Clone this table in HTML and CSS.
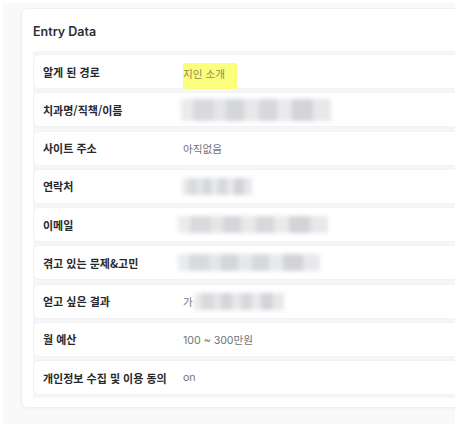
FILE: index.html
```html
<!DOCTYPE html>
<html lang="ko">
<head>
<meta charset="utf-8">
<link rel="stylesheet" href="styles.css">
</head>
<body>
<div class="page">
  <div class="card">
    <h2 class="title">Entry Data</h2>
    <div class="list">
      <div class="row"><div class="label">알게 된 경로</div><div class="value"><span class="mark">지인 소개</span></div></div>
      <div class="row"><div class="label">치과명/직책/이름</div><div class="value"><span class="blur b-name"></span></div></div>
      <div class="row"><div class="label">사이트 주소</div><div class="value">아직없음</div></div>
      <div class="row"><div class="label">연락처</div><div class="value"><span class="blur b-phone"></span></div></div>
      <div class="row"><div class="label">이메일</div><div class="value"><span class="blur b-mail"></span></div></div>
      <div class="row"><div class="label">겪고 있는 문제&amp;고민</div><div class="value"><span class="blur b-issue"></span></div></div>
      <div class="row"><div class="label">얻고 싶은 결과</div><div class="value">가<span class="blur b-goal"></span></div></div>
      <div class="row"><div class="label">월 예산</div><div class="value">100 ~ 300만원</div></div>
      <div class="row"><div class="label">개인정보 수집 및 이용 동의</div><div class="value">on</div></div>
    </div>
  </div>
</div>
</body>
</html>
```

FILE: styles.css
```css
html, body {
  margin: 0;
  padding: 0;
  background: #ffffff;
}
body {
  width: 473px;
  height: 436px;
  overflow: hidden;
  font-family: Inter, "Noto Sans CJK KR", sans-serif;
}
.page {
  margin: 3px 0 0 3px;
  width: 452px;
  height: 421px;
  background: #f8f9fa;
  overflow: hidden;
  padding: 5px 0 0 18px;
  box-sizing: border-box;
}
.card {
  width: 470px;
  background: #ffffff;
  border: 1px solid #eef0f2;
  border-radius: 7px;
  box-shadow: 0 1px 3px rgba(0, 0, 0, 0.04);
  padding: 14px 0 9px 11px;
  box-sizing: border-box;
}
.title {
  margin: 0;
  font-size: 12.5px;
  font-weight: 600;
  color: #2b2f33;
  line-height: 17px;
  height: 17px;
}
.list {
  margin-top: 11px;
  background: #f5f6f8;
  display: flex;
  flex-direction: column;
  gap: 3.25px;
  padding: 3px 0;
}
.row {
  height: 35px;
  background: #ffffff;
  border-radius: 6px;
  border: 1px solid #f1f2f4;
  box-sizing: border-box;
  display: flex;
  align-items: center;
  padding-left: 9px;
}
.label {
  width: 140px;
  flex: none;
  font-size: 11px;
  font-weight: 700;
  color: #26292c;
  font-family: "Noto Sans CJK KR", sans-serif;
}
.value {
  display: flex;
  align-items: center;
  font-size: 10.6px;
  color: #6f7377;
  font-family: Inter, "Noto Sans CJK KR", sans-serif;
  position: relative;
}
.mark {
  background: #fbfd7c;
  color: #8a8c5a;
  padding: 7px 0 9px 0;
  width: 54px;
  display: inline-block;
  line-height: 10px;
  margin-top: 9px;
}
.blur {
  display: inline-block;
  filter: blur(2px);
  background:
    linear-gradient(90deg, #eaebed 0 8%, #d9dadd 8% 22%, #e5e6e8 22% 30%, #d4d6d9 30% 42%, #e7e8ea 42% 52%, #d7d8db 52% 64%, #e9eaec 64% 74%, #d3d4d8 74% 88%, #e7e8ea 88% 100%);
}
.b-name { width: 150px; height: 22px; margin-left: -2px; }
.b-phone { width: 70px; height: 17px; margin-left: -1px; }
.b-mail { width: 150px; height: 17px; margin-left: -5px; }
.b-issue { width: 142px; height: 17px; margin-left: -5px; }
.b-goal { width: 90px; height: 17px; margin-left: 1px; }
```
